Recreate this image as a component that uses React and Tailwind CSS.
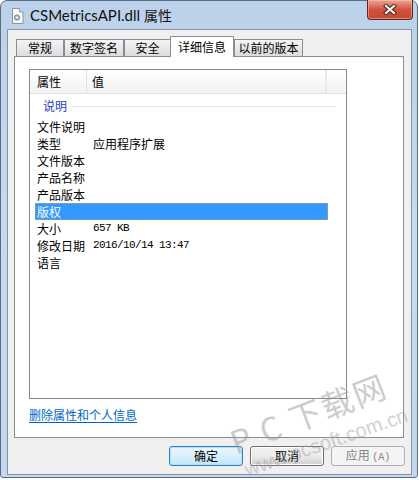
import React from 'react';

// Filas de la lista de propiedades (nombre, valor, tipo de fuente del valor)
const rows = [
  { name: '文件说明', value: '' },
  { name: '类型', value: '应用程序扩展' },
  { name: '文件版本', value: '' },
  { name: '产品名称', value: '' },
  { name: '产品版本', value: '' },
  { name: '版权', value: '', selected: true },
  { name: '大小', value: '657 KB', mono: true },
  { name: '修改日期', value: '2016/10/14 13:47', mono: true },
  { name: '语言', value: '' },
];

const tabs = [
  { label: '常规', w: 'w-[48px]' },
  { label: '数字签名', w: 'w-[60px]' },
  { label: '安全', w: 'w-[47px]' },
  { label: '详细信息', w: 'w-[64px]', active: true },
  { label: '以前的版本', w: 'w-[69px]' },
];

const FileIcon = () => (
  <svg width="13" height="16" viewBox="0 0 13 16">
    <path d="M1.5 0.5h7l3.5 3.5v11.5h-10.5z" fill="#fbfbfb" stroke="#8c96a3" />
    <path d="M8.5 0.5v3.5h3.5" fill="#e4e8ee" stroke="#8c96a3" />
    <circle cx="6" cy="9.5" r="2.6" fill="#b9c4cf" stroke="#6d7a89" />
    <circle cx="6" cy="9.5" r="1" fill="#fbfbfb" />
  </svg>
);

const CloseGlyph = () => (
  <svg width="14" height="11" viewBox="0 0 14 11">
    <path d="M3 2l8 7M11 2l-8 7" stroke="#4a1f17" strokeWidth="4.2" strokeLinecap="square" />
    <path d="M3 2l8 7M11 2l-8 7" stroke="#ffffff" strokeWidth="2.2" strokeLinecap="square" />
  </svg>
);

export default function App() {
  const cjk = "font-['Microsoft_YaHei','Noto_Sans_CJK_SC',sans-serif]";

  return (
    <div className="w-[419px] h-[480px] bg-white relative overflow-hidden">
      {/* Ventana con marco Aero */}
      <div className="w-[418px] h-[478px] flex flex-col border border-[#5b6c80] rounded-t-[7px] rounded-b-[3px] bg-gradient-to-b from-[#bcd2ea] via-[#c7daef] to-[#c3d7ee]">
        {/* Barra de título */}
        <div className="h-[28px] flex items-start pl-[10px] shrink-0">
          <div className="mt-[7px]"><FileIcon /></div>
          <span className="ml-[6px] mt-[4px] text-[15px] leading-[20px] text-[#111] font-['Lato','Liberation_Sans','Noto_Sans_CJK_SC',sans-serif]">
            CSMetricsAPI.dll <span className={cjk + ' text-[14px]'}>属性</span>
          </span>
          <div className="ml-auto mr-[4px] -mt-px w-[46px] h-[20px] flex items-center justify-center rounded-b-[4px] border border-[#5a271d] border-t-0 bg-gradient-to-b from-[#e9a595] via-[#d1533d] to-[#c6472f] shadow-[inset_0_0_0_1px_rgba(255,200,190,0.5)]">
            <CloseGlyph />
          </div>
        </div>

        {/* Cuerpo del diálogo */}
        <div className={'ml-[6px] w-[405px] h-[446px] border border-[#8593a4] bg-[#f0f0f0] flex flex-col ' + cjk}>
          {/* Pestañas */}
          <div className="flex items-end pl-[8px] pt-[6px] h-[26px]">
            {tabs.map((t) =>
              t.active ? (
                <div
                  key={t.label}
                  className={t.w + ' -ml-px h-[21px] -mb-px relative z-10 bg-white border border-b-0 border-[#898c95] flex items-center justify-center text-[12px] leading-none text-[#000]'}
                >
                  {t.label}
                </div>
              ) : (
                <div
                  key={t.label}
                  className={t.w + ' h-[17px] bg-gradient-to-b from-[#f4f4f4] to-[#dcdcdc] border border-b-0 border-[#898c95] flex items-center justify-center text-[12px] leading-none text-[#000]'}
                >
                  {t.label}
                </div>
              )
            )}
          </div>

          {/* Panel de la pestaña */}
          <div className="ml-[6px] w-[390px] h-[382px] border border-[#898c95] bg-white flex flex-col">
            {/* Lista de propiedades */}
            <div className="ml-[14px] mt-[12px] w-[318px] h-[330px] border border-[#828790] bg-white flex flex-col">
              <div className="h-[24px] flex border-b border-[#e3e4e6] bg-gradient-to-b from-[#ffffff] to-[#f1f2f4] text-[12px] text-[#000]">
                <div className="w-[57px] pl-[7px] flex items-center border-r border-[#e2e3e5]">属性</div>
                <div className="w-[240px] pl-[5px] flex items-center border-r-2 border-[#e8e9eb]">值</div>
                <div className="flex-1" />
              </div>

              <div className="h-[24px] flex items-center pl-[13px] pr-[10px]">
                <span className="text-[12px] text-[#1e3ec8] leading-none">说明</span>
                <div className="flex-1 ml-[5px] h-px bg-[#dfe6ee]" />
              </div>

              <div className="flex flex-col">
                {rows.map((r) => (
                  <div
                    key={r.name}
                    className={
                      'ml-[5px] w-[293px] h-[17px] flex items-center text-[12px] leading-none ' +
                      (r.selected ? 'bg-[#3399ff] text-white outline outline-1 outline-dotted outline-[#c9a06a] -outline-offset-1' : 'text-[#000]')
                    }
                  >
                    <span className="w-[58px] pl-[2px]">{r.name}</span>
                    {r.mono ? (
                      <span className="text-[11px] tracking-[-0.6px] font-['Liberation_Mono',monospace]">{r.value}</span>
                    ) : (
                      <span>{r.value}</span>
                    )}
                  </div>
                ))}
              </div>
            </div>

            <div className="ml-[14px] mt-[8px] text-[12px] leading-[16px] text-[#0066cc] underline underline-offset-2">
              删除属性和个人信息
            </div>
          </div>

          {/* Botones */}
          <div className="flex justify-end gap-[7px] pr-[6px] mt-[8px]">
            <button className="w-[74px] h-[20px] rounded-[3px] border border-[#3c7fb1] bg-gradient-to-b from-[#eaf6fd] via-[#d9f0fc] to-[#bee6fd] shadow-[inset_0_0_0_1px_#a9e4fe] text-[12px] leading-none text-[#000]">
              确定
            </button>
            <button className="w-[74px] h-[20px] rounded-[3px] border border-[#707070] bg-gradient-to-b from-[#f2f2f2] via-[#ebebeb] to-[#cfcfcf] shadow-[inset_0_0_0_1px_#fcfcfc] text-[12px] leading-none text-[#000]">
              取消
            </button>
            <button className="w-[74px] h-[20px] rounded-[3px] border border-[#adb2b5] bg-[#f4f4f4] text-[12px] leading-none text-[#838383]">
              应用 <span className="text-[10px] font-['Liberation_Mono',monospace]">(A)</span>
            </button>
          </div>
        </div>
      </div>

      {/* Marca de agua superpuesta */}
      <div className="absolute left-[231px] top-[426px] whitespace-nowrap pointer-events-none -rotate-[21deg] origin-left text-[32px] leading-none tracking-[2px] text-[#9a9a9a] opacity-50 font-['Noto_Sans_CJK_SC',sans-serif]">
        P C 下载网
      </div>
      <div className="absolute left-[245px] top-[460px] whitespace-nowrap pointer-events-none -rotate-[19deg] origin-left text-[20px] leading-none text-[#a5a5a5] opacity-50 font-['Liberation_Sans',sans-serif]">
        www.pcsoft.com.cn
      </div>
    </div>
  );
}
